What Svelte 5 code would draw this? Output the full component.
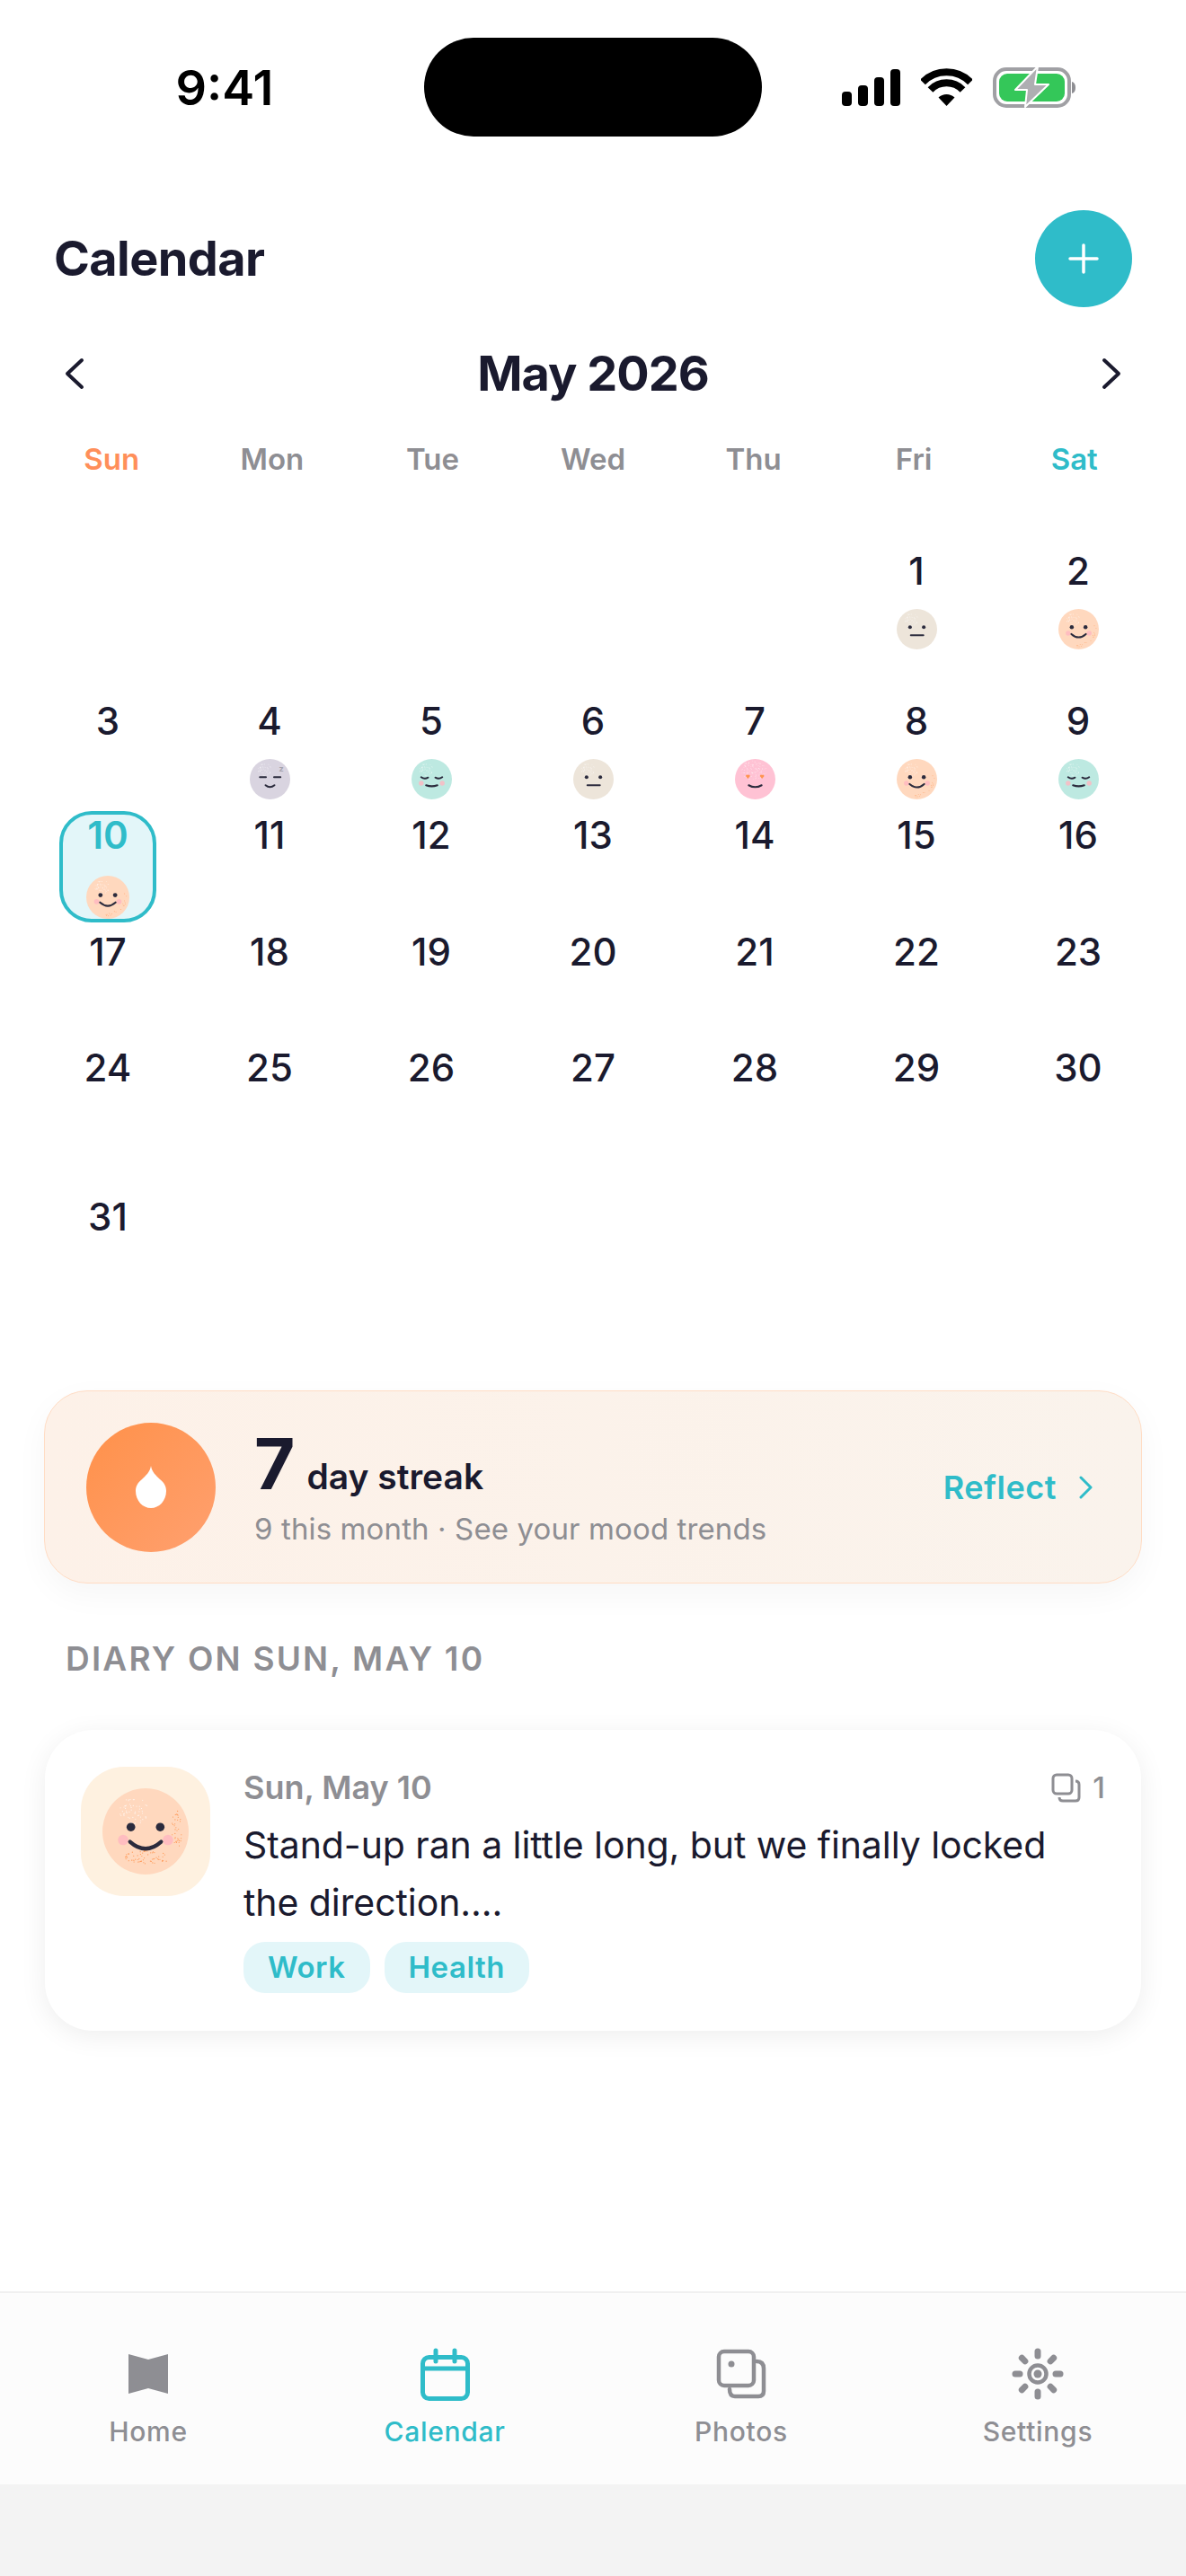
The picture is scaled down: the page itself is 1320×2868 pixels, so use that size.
<script>
  const weekdays = ['Sun', 'Mon', 'Tue', 'Wed', 'Thu', 'Fri', 'Sat'];

  const moods = {
    1: 'neutral', 2: 'happy', 4: 'sleepy', 5: 'calm', 6: 'neutral',
    7: 'love', 8: 'happy', 9: 'calm', 10: 'happy'
  };

  const selectedDay = 10;
  const firstOffset = 5;
  const cells = [
    ...Array(firstOffset).fill(null),
    ...Array.from({ length: 31 }, (_, i) => i + 1)
  ];

  const faceColors = {
    neutral: '#ede5da',
    happy: '#ffd8be',
    sleepy: '#d9d4e0',
    calm: '#bde9e1',
    love: '#ffc2d4'
  };

  // small seeded random so the speckles stay put between renders
  function rng(seed) {
    let s = seed;
    return () => {
      s = (s * 9301 + 49297) % 233280;
      return s / 233280;
    };
  }

  function speckle(seed, count, cx, cy, rx, ry) {
    const r = rng(seed);
    const out = [];
    for (let i = 0; i < count; i++) {
      const a = r() * Math.PI * 2;
      const d = Math.sqrt(r());
      out.push({ x: cx + Math.cos(a) * d * rx, y: cy + Math.sin(a) * d * ry });
    }
    return out;
  }

  function freckles(seed, count) {
    const r = rng(seed);
    const out = [];
    for (let i = 0; i < count; i++) {
      const a = (r() * 115 - 15) * (Math.PI / 180);
      const d = 36 + r() * 10;
      out.push({ x: 50 + Math.cos(a) * d, y: 50 + Math.sin(a) * d });
    }
    return out;
  }

  const highlight = speckle(7, 60, 36, 26, 17, 16);
  const loveHighlight = speckle(11, 110, 46, 28, 32, 24);
  const orangeDots = freckles(3, 18);
  const chinDots = speckle(5, 60, 52, 80, 27, 8);
  const sideDots = speckle(9, 36, 86, 48, 6, 22);
</script>

{#snippet face(mood, dense = false)}
  <svg class="face-svg" viewBox="0 0 100 100">
    <circle cx="50" cy="50" r="50" fill={faceColors[mood]} />
    {#each mood === 'love' ? loveHighlight : highlight as d}
      <circle cx={d.x} cy={d.y} r={dense ? 0.6 : 0.9} fill="#fff" opacity="0.75" />
    {/each}
    {#if mood === 'happy'}
      {#if dense}
        {#each chinDots as d}
          <circle cx={d.x} cy={d.y} r="0.6" fill="#ff9450" />
        {/each}
        {#each sideDots as d}
          <circle cx={d.x} cy={d.y} r="0.6" fill="#ff9450" />
        {/each}
      {:else}
        {#each orangeDots as d}
          <circle cx={d.x} cy={d.y} r="0.9" fill="#ff9450" />
        {/each}
      {/if}
    {/if}
    {#if mood === 'happy' || mood === 'calm'}
      <circle cx="24" cy="60" r="6" fill="#ffb6c1" opacity="0.8" />
      <circle cx="76" cy="60" r="6" fill="#ffb6c1" opacity="0.8" />
    {/if}

    <g fill="none" stroke="#2b2b3d" stroke-width="4.5" stroke-linecap="round">
      {#if mood === 'neutral'}
        <circle cx="33" cy="45" r="4.5" fill="#2b2b3d" stroke="none" />
        <circle cx="67" cy="45" r="4.5" fill="#2b2b3d" stroke="none" />
        <path d="M35 65H66" />
      {:else if mood === 'happy'}
        <circle cx="33" cy="45" r="5" fill="#2b2b3d" stroke="none" />
        <circle cx="67" cy="45" r="5" fill="#2b2b3d" stroke="none" />
        <path d="M32 62Q50 78 68 62" />
      {:else if mood === 'sleepy'}
        <path d="M25 45H40M60 45H76" />
        <path d="M39 65Q50 74 61 65" />
      {:else if mood === 'calm'}
        <path d="M24 45Q32 51 41 46M59 46Q68 51 76 45" />
        <path d="M36 65Q50 70 64 65" />
      {:else if mood === 'love'}
        <path d="M34 65Q50 74 66 65" />
      {/if}
    </g>
    {#if mood === 'love'}
      <path d="M32 49l-5-6a3 3 0 0 1 5-3a3 3 0 0 1 5 3zM67 49l-5-6a3 3 0 0 1 5-3a3 3 0 0 1 5 3z" fill="#ff9450" />
    {/if}
    {#if mood === 'sleepy'}
      <text class="zed" x="72" y="32">z</text>
    {/if}
  </svg>
{/snippet}

<div class="phone">
  <div class="screen">
    <div class="statusbar">
      <span class="time">9:41</span>
      <div class="island"></div>
      <div class="status-icons">
        <svg width="65" height="41" viewBox="0 0 65 41">
          <rect x="0" y="25" width="11" height="16" rx="4" />
          <rect x="18" y="18" width="11" height="23" rx="4" />
          <rect x="36" y="9" width="11" height="32" rx="4" />
          <rect x="54" y="0" width="11" height="41" rx="4" />
        </svg>
        <svg width="57" height="42" viewBox="0 0 57 42">
          <path d="M2 15.5a37 37 0 0 1 53 0" fill="none" stroke="#000" stroke-width="8" />
          <path d="M10.5 24a25 25 0 0 1 36 0" fill="none" stroke="#000" stroke-width="8" />
          <path d="M28.5 42L19.5 32.5a13 13 0 0 1 18 0z" />
        </svg>
        <svg class="battery" width="94" height="48" viewBox="0 0 94 48">
          <rect x="4" y="4" width="83" height="41" rx="13" fill="none" stroke="#a0a0a4" stroke-width="4" />
          <rect x="9" y="9" width="73" height="31" rx="9" fill="#34c759" />
          <path d="M90 18q4 1 4 6.500t-4 6.500z" fill="#8e8e93" />
          <path d="M52 1L27 27H40L38 46L64 21H49z" fill="#aeaeb2" stroke="#fff" stroke-width="2" stroke-linejoin="round" />
        </svg>
      </div>
    </div>

    <header class="page-header">
      <h1>Calendar</h1>
      <div class="add-btn">
        <svg width="36" height="36" viewBox="0 0 36 36">
          <path d="M18 3V33M3 18H33" stroke="#fff" stroke-width="3.500" stroke-linecap="round" />
        </svg>
      </div>
    </header>

    <div class="month-nav">
      <svg class="chev" width="48" height="48" viewBox="0 0 48 48">
        <path d="M32 9L16 24L32 39" />
      </svg>
      <h2>May 2026</h2>
      <svg class="chev" width="48" height="48" viewBox="0 0 48 48">
        <path d="M16 9L32 24L16 39" />
      </svg>
    </div>

    <div class="weekdays">
      {#each weekdays as day}
        <span class:sun={day === 'Sun'} class:sat={day === 'Sat'}>{day}</span>
      {/each}
    </div>

    <div class="days">
      {#each cells as day}
        {#if day === null}
          <div class="cell"></div>
        {:else}
          <div class="cell">
            <div class="day" class:selected={day === selectedDay}>
              <span class="num">{day}</span>
              {#if moods[day]}
                <div class="face">{@render face(moods[day])}</div>
              {/if}
            </div>
          </div>
        {/if}
      {/each}
    </div>

    <section class="streak">
      <div class="flame">
        <svg width="36" height="48" viewBox="0 0 36 48">
          <path d="M18 0C19 7 24 11 28 15C33 19 35 23 35 28C35 39 27 47 18 47C9 47 1 39 1 28C1 23 3 19 8 15C12 11 17 7 18 0Z" fill="#fff" />
        </svg>
      </div>
      <div class="streak-text">
        <div class="streak-title"><b>7</b><span>day streak</span></div>
        <div class="streak-sub">9 this month · See your mood trends</div>
      </div>
      <div class="reflect">
        <span>Reflect</span>
        <svg width="18" height="26" viewBox="0 0 18 26">
          <path d="M3 2L14 13L3 24" />
        </svg>
      </div>
    </section>

    <div class="section-label">DIARY ON SUN, MAY 10</div>

    <article class="entry">
      <div class="tile">
        <div class="tile-face">{@render face('happy', true)}</div>
      </div>
      <div class="entry-main">
        <div class="entry-top">
          <span class="entry-date">Sun, May 10</span>
          <span class="entry-count">
            <svg width="33" height="33" viewBox="0 0 33 33">
              <rect x="2" y="2" width="21" height="21" rx="4" />
              <path d="M27 9q4 0 4 4V27q0 4-4 4H13q-4 0-4-4" />
            </svg>
            1
          </span>
        </div>
        <p>Stand-up ran a little long, but we finally locked the direction....</p>
        <div class="tags">
          <span>Work</span>
          <span>Health</span>
        </div>
      </div>
    </article>

    <nav class="tabbar">
      <div class="tab">
        <svg width="84" height="84" viewBox="0 0 84 84">
          <path d="M20 20L42 26L64 20V64L42 58L20 64Z" fill="#8e8e93" />
        </svg>
        <span>Home</span>
      </div>
      <div class="tab active">
        <svg class="line" width="84" height="84" viewBox="0 0 84 84">
          <rect x="17.500" y="23.500" width="50" height="46" rx="7" />
          <path d="M17.500 36H67.500M32 16V28M53 16V28" />
        </svg>
        <span>Calendar</span>
      </div>
      <div class="tab">
        <svg class="line" width="84" height="84" viewBox="0 0 84 84">
          <rect x="17" y="17" width="39" height="38" rx="6" />
          <path d="M59 28q8 0 8 8V61q0 6-6 6H35q-6 0-6-8" />
          <circle cx="31" cy="31" r="3.500" fill="#8e8e93" stroke="none" />
        </svg>
        <span>Photos</span>
      </div>
      <div class="tab">
        <svg class="line" width="84" height="84" viewBox="0 0 84 84">
          <circle cx="42" cy="42" r="9.500" />
          <circle cx="42" cy="42" r="4.500" fill="#8e8e93" stroke="none" />
          {#each [0, 45, 90, 135, 180, 225, 270, 315] as deg}
            <path class="ray" d="M42 17V22" transform="rotate({deg} 42 42)" />
          {/each}
        </svg>
        <span>Settings</span>
      </div>
    </nav>
  </div>
</div>

<style>
  :global(body) {
    margin: 0;
  }

  .phone {
    width: 1320px;
    height: 2868px;
    background: #f3f3f3;
    font-family: Inter, 'Noto Sans', sans-serif;
    color: #1a1a2e;
    overflow: hidden;
  }

  .screen {
    height: 2766px;
    background: #fff;
    display: flex;
    flex-direction: column;
  }

  .statusbar {
    display: grid;
    grid-template-columns: 472px 376px 1fr;
    align-items: center;
    padding-top: 42px;
    margin-bottom: 82px;
  }
  .time {
    font-size: 54px;
    font-weight: 600;
    color: #000;
    text-align: center;
    padding-left: 28px;
  }
  .island {
    height: 110px;
    background: #000;
    border-radius: 55px;
  }
  .status-icons {
    display: flex;
    align-items: center;
    padding-left: 89px;
    gap: 23px;
  }
  .battery {
    margin-left: -2px;
  }

  .page-header {
    display: flex;
    align-items: center;
    justify-content: space-between;
    padding: 0 60px;
  }
  h1 {
    margin: 0;
    font-size: 54px;
    font-weight: 700;
    letter-spacing: -0.6px;
    line-height: 66px;
  }
  .add-btn {
    width: 108px;
    height: 108px;
    border-radius: 50%;
    background: #2fbcc9;
    display: flex;
    align-items: center;
    justify-content: center;
  }

  .month-nav {
    display: flex;
    align-items: center;
    justify-content: space-between;
    padding: 0 59px;
    height: 68px;
    margin-top: 40px;
  }
  h2 {
    margin: 0;
    font-size: 54px;
    font-weight: 700;
    letter-spacing: -1px;
    line-height: 68px;
  }
  .chev path {
    fill: none;
    stroke: #1a1a2e;
    stroke-width: 4;
    stroke-linecap: round;
    stroke-linejoin: round;
  }

  .weekdays {
    display: grid;
    grid-template-columns: repeat(7, 1fr);
    padding: 0 35px;
    margin-top: 41px;
    margin-bottom: 78px;
    font-size: 33px;
    font-weight: 600;
    line-height: 40px;
    color: #8e8e93;
    text-align: center;
  }
  .sun {
    color: #ff8f5a;
  }
  .sat {
    color: #2fbcc9;
  }

  .days {
    display: grid;
    grid-template-columns: repeat(7, 180px);
    grid-template-rows: 167px 127px 130px 129px 166px 220px;
    padding: 0 30px;
  }
  .cell {
    display: flex;
    justify-content: center;
  }
  .day {
    display: flex;
    flex-direction: column;
    align-items: center;
  }
  .num {
    font-size: 42px;
    font-weight: 500;
    line-height: 54px;
  }
  .face {
    width: 45px;
    height: 45px;
    margin-top: 15px;
  }
  .face-svg {
    display: block;
    width: 100%;
    height: 100%;
  }
  .selected {
    box-sizing: border-box;
    width: 108px;
    height: 124px;
    border: 4px solid #2fbcc9;
    border-radius: 36px;
    background: #e3f6f9;
  }
  .selected .num {
    color: #2fbcc9;
    font-weight: 600;
    line-height: 46px;
  }
  .selected .face {
    width: 48px;
    height: 48px;
    margin-top: auto;
  }
  .zed {
    font-size: 20px;
    font-weight: 700;
    fill: #a5a3ad;
  }

  .streak {
    box-sizing: border-box;
    height: 215px;
    margin: 0 49px;
    padding: 0 52px 0 46px;
    display: flex;
    align-items: center;
    gap: 43px;
    border: 1.500px solid #ffdcc4;
    border-radius: 48px;
    background: linear-gradient(90deg, #fdf1e8, #faf3ec);
    box-shadow: 0 12px 36px rgba(0, 0, 0, 0.04);
  }
  .flame {
    width: 144px;
    height: 144px;
    flex: none;
    border-radius: 50%;
    background: linear-gradient(135deg, #ff914a, #ffa06f);
    display: flex;
    align-items: center;
    justify-content: center;
  }
  .streak-text {
    flex: 1;
  }
  .streak-title {
    display: flex;
    align-items: baseline;
    gap: 13px;
    line-height: 84px;
  }
  .streak-title b {
    font-size: 78px;
    font-weight: 700;
  }
  .streak-title span {
    font-size: 39px;
    font-weight: 600;
  }
  .streak-sub {
    margin-top: -6px;
    font-size: 33px;
    line-height: 44px;
    color: #8e8e93;
    letter-spacing: 0.12px;
  }
  .reflect {
    display: flex;
    align-items: center;
    gap: 24px;
    font-size: 36px;
    font-weight: 600;
    color: #2fbcc9;
    letter-spacing: 0.5px;
  }
  .reflect path {
    fill: none;
    stroke: #2fbcc9;
    stroke-width: 3;
    stroke-linecap: round;
    stroke-linejoin: round;
  }

  .section-label {
    margin: 62px 0 0 73px;
    font-size: 37px;
    font-weight: 600;
    line-height: 44px;
    letter-spacing: 2.2px;
    color: #8e8e93;
  }

  .entry {
    box-sizing: border-box;
    margin: 57px 50px 0;
    height: 335px;
    padding: 41px 40px 0;
    display: flex;
    gap: 37px;
    background: #fff;
    border-radius: 54px;
    box-shadow: 0 6px 30px rgba(0, 0, 0, 0.07);
  }
  .tile {
    width: 144px;
    height: 144px;
    flex: none;
    border-radius: 48px;
    background: #fef1e0;
    display: flex;
    align-items: center;
    justify-content: center;
  }
  .tile-face {
    width: 96px;
    height: 96px;
  }
  .entry-main {
    flex: 1;
  }
  .entry-top {
    display: flex;
    justify-content: space-between;
    align-items: center;
    height: 46px;
    color: #8e8e93;
  }
  .entry-date {
    font-size: 36px;
    font-weight: 600;
  }
  .entry-count {
    display: flex;
    align-items: center;
    gap: 13px;
    font-size: 33px;
    font-weight: 500;
  }
  .entry-count svg {
    fill: none;
    stroke: #8e8e93;
    stroke-width: 3;
  }
  p {
    margin: 9px 0 12px;
    font-size: 41px;
    letter-spacing: -0.08px;
    line-height: 64px;
  }
  .tags {
    display: flex;
    gap: 16px;
  }
  .tags span {
    padding: 0 27px;
    height: 57px;
    line-height: 57px;
    border-radius: 24px;
    background: #e3f6f9;
    color: #2fbcc9;
    font-size: 33px;
    font-weight: 600;
    letter-spacing: 0.5px;
  }

  .tabbar {
    margin-top: auto;
    height: 215px;
    box-sizing: border-box;
    border-top: 2px solid #f0f0f0;
    background: #fcfcfc;
    display: grid;
    grid-template-columns: repeat(4, 1fr);
    padding-top: 48px;
  }
  .tab {
    display: flex;
    flex-direction: column;
    align-items: center;
    color: #8e8e93;
    font-size: 30px;
    font-weight: 500;
    line-height: 40px;
    letter-spacing: 0.7px;
  }
  .tab svg {
    margin-bottom: 2px;
  }
  .line {
    fill: none;
    stroke: #8e8e93;
    stroke-width: 4.500;
    stroke-linecap: round;
  }
  .ray {
    stroke-width: 7;
  }
  .active {
    color: #2fbcc9;
  }
  .active .line {
    stroke: #2fbcc9;
    stroke-width: 5;
  }
</style>
